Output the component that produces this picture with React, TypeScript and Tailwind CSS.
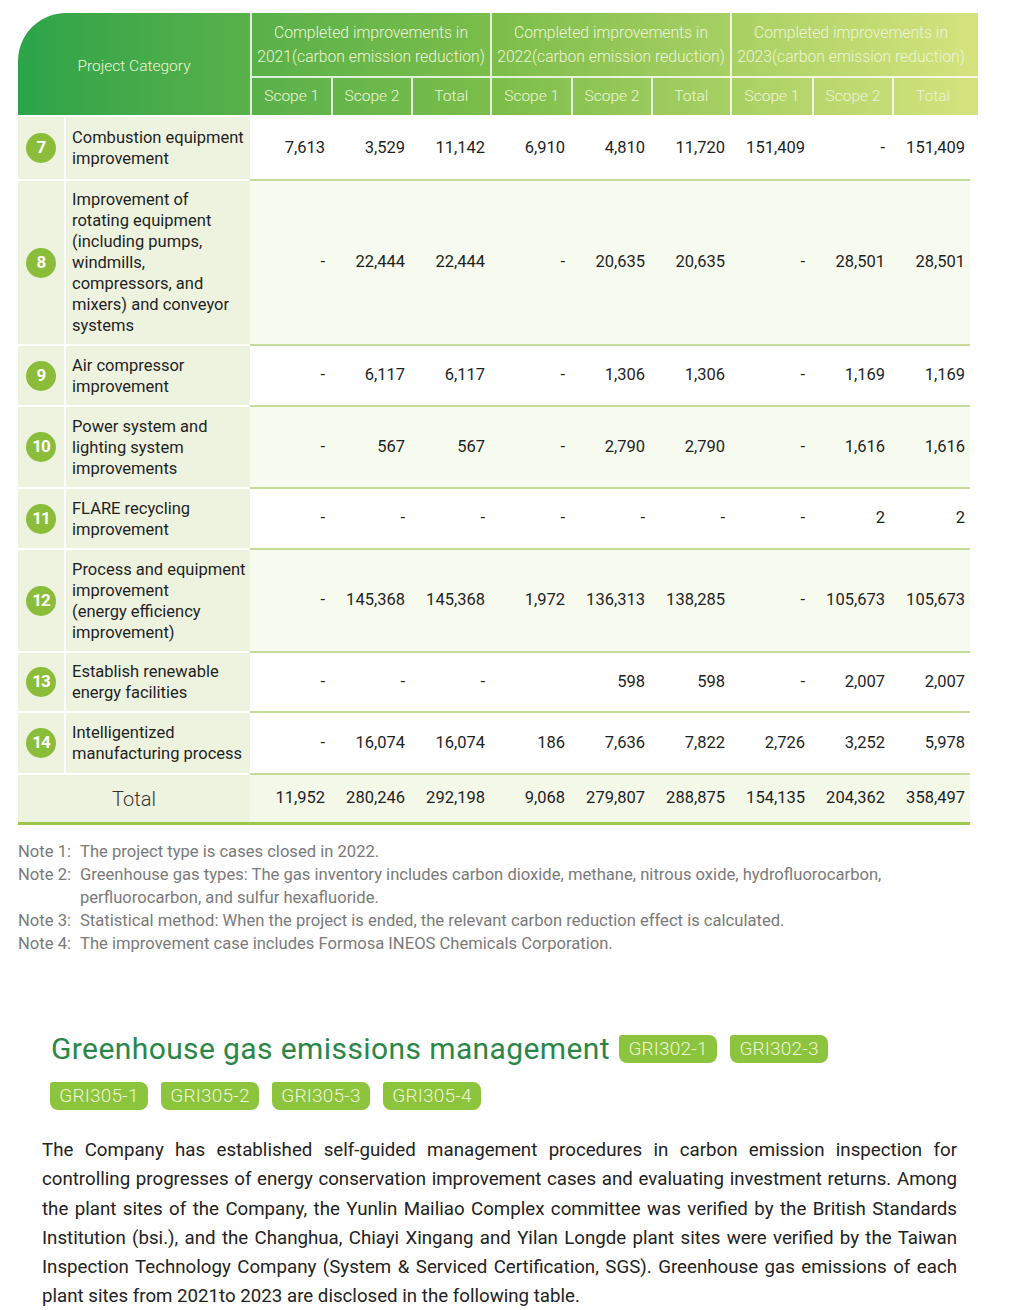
import React from "react";

type Row = {
  n: number;
  label: string[];
  h: string;
  shade: boolean;
  v: string[];
};

const rows: Row[] = [
  {
    n: 7,
    label: ["Combustion equipment", "improvement"],
    h: "h-[64px]",
    shade: false,
    v: ["7,613", "3,529", "11,142", "6,910", "4,810", "11,720", "151,409", "-", "151,409"],
  },
  {
    n: 8,
    label: [
      "Improvement of",
      "rotating equipment",
      "(including pumps,",
      "windmills,",
      "compressors, and",
      "mixers) and conveyor",
      "systems",
    ],
    h: "h-[165px]",
    shade: true,
    v: ["-", "22,444", "22,444", "-", "20,635", "20,635", "-", "28,501", "28,501"],
  },
  {
    n: 9,
    label: ["Air compressor", "improvement"],
    h: "h-[61px]",
    shade: false,
    v: ["-", "6,117", "6,117", "-", "1,306", "1,306", "-", "1,169", "1,169"],
  },
  {
    n: 10,
    label: ["Power system and", "lighting system", "improvements"],
    h: "h-[82px]",
    shade: true,
    v: ["-", "567", "567", "-", "2,790", "2,790", "-", "1,616", "1,616"],
  },
  {
    n: 11,
    label: ["FLARE recycling", "improvement"],
    h: "h-[61px]",
    shade: false,
    v: ["-", "-", "-", "-", "-", "-", "-", "2", "2"],
  },
  {
    n: 12,
    label: ["Process and equipment", "improvement", "(energy efficiency", "improvement)"],
    h: "h-[103px]",
    shade: true,
    v: ["-", "145,368", "145,368", "1,972", "136,313", "138,285", "-", "105,673", "105,673"],
  },
  {
    n: 13,
    label: ["Establish renewable", "energy facilities"],
    h: "h-[60px]",
    shade: false,
    v: ["-", "-", "-", "", "598", "598", "-", "2,007", "2,007"],
  },
  {
    n: 14,
    label: ["Intelligentized", "manufacturing process"],
    h: "h-[62px]",
    shade: false,
    v: ["-", "16,074", "16,074", "186", "7,636", "7,822", "2,726", "3,252", "5,978"],
  },
];

const totals = ["11,952", "280,246", "292,198", "9,068", "279,807", "288,875", "154,135", "204,362", "358,497"];

const years = ["2021", "2022", "2023"];

const notes = [
  ["Note 1:", "The project type is cases closed in 2022."],
  [
    "Note 2:",
    "Greenhouse gas types: The gas inventory includes carbon dioxide, methane, nitrous oxide, hydrofluorocarbon, perfluorocarbon, and sulfur hexafluoride.",
  ],
  ["Note 3:", "Statistical method: When the project is ended, the relevant carbon reduction effect is calculated."],
  ["Note 4:", "The improvement case includes Formosa INEOS Chemicals Corporation."],
];

const paragraph = [
  "The Company has established self-guided management procedures in carbon emission inspection for",
  "controlling progresses of energy conservation improvement cases and evaluating investment returns. Among",
  "the plant sites of the Company, the Yunlin Mailiao Complex committee was verified by the British Standards",
  "Institution (bsi.), and the Changhua, Chiayi Xingang and Yilan Longde plant sites were verified by the Taiwan",
  "Inspection Technology Company (System & Serviced Certification, SGS). Greenhouse gas emissions of each",
];

function Badge({ children }: { children: React.ReactNode }) {
  return (
    <span className="flex h-[28px] w-[98px] items-center justify-center rounded-lg rounded-tl-[3px] bg-[#8cc43e] text-[19px] font-light tracking-[0.2px] text-[#eef6d6]">
      {children}
    </span>
  );
}

export default function App() {
  return (
    <div className="min-h-[1310px] w-[1009px] bg-white pt-[13px] font-[Roboto,sans-serif]">
      {/* Table header */}
      <div className="ml-[18px] mb-[2px] flex h-[102px] w-[960px] rounded-tl-[48px] bg-linear-to-r from-[#2ba449] via-[#7cbe4a] to-[#d5e37e] text-[15.5px] font-light text-[#eef5da]">
        <div className="flex w-[232px] items-center justify-center pt-[6px]">Project Category</div>
        {years.map((y, i) => (
          <div
            key={y}
            className={`flex flex-col border-l-2 border-white/80 ${i === 2 ? "w-[248px]" : "w-[240px]"}`}
          >
            <div className={`flex h-[63px] flex-col items-center justify-center whitespace-nowrap text-[15.7px] leading-[24px] ${i === 2 ? "pr-[8px]" : ""}`}>
              <span>Completed improvements in</span>
              <span>{y}(carbon emission reduction)</span>
            </div>
            <div className="flex h-[39px] border-t-2 border-white/80">
              {["Scope 1", "Scope 2", "Total"].map((s, j) => (
                <div
                  key={s}
                  className={`flex w-[80px] items-center justify-center ${j > 0 ? "border-l-2 border-white/80" : ""}`}
                >
                  {s}
                </div>
              ))}
            </div>
          </div>
        ))}
      </div>

      {/* Table body */}
      <div className="ml-[18px] w-[952px] text-[16.5px] text-[#1f1f1f]">
        {rows.map((r) => (
          <div key={r.n} className={`flex ${r.h}`}>
            <div className="flex w-[232px] border-b-2 border-white">
              <div className="flex w-[48px] items-center justify-center border-r-2 border-white bg-[#edf3df]">
                <span className="flex h-[30px] w-[30px] items-center justify-center rounded-full bg-[#8bbd3b] text-[17px] font-bold tracking-[-1px] text-white">
                  {r.n}
                </span>
              </div>
              <div className="flex flex-1 flex-col justify-center bg-[#edf3df] pl-[6px] leading-[21px]">
                {r.label.map((l) => (
                  <span key={l} className="whitespace-nowrap">{l}</span>
                ))}
              </div>
            </div>
            <div className={`flex flex-1 border-b-2 border-[#c6da99] ${r.shade ? "bg-[#f7faee]" : "bg-white"}`}>
              {r.v.map((v, i) => (
                <div key={i} className="flex w-[80px] items-center justify-end pr-[5px]">
                  {v}
                </div>
              ))}
            </div>
          </div>
        ))}
        <div className="flex h-[50px] border-b-[3px] border-[#9dc74c]">
          <div className="flex w-[232px] items-center justify-center bg-[#edf3df] text-[20px] font-light text-[#333]">
            Total
          </div>
          <div className="flex flex-1 bg-[#f4f8e9]">
            {totals.map((v, i) => (
              <div key={i} className="flex w-[80px] items-center justify-end pr-[5px]">
                {v}
              </div>
            ))}
          </div>
        </div>
      </div>

      {/* Notes */}
      <div className="ml-[18px] mt-[15px] w-[880px] text-[16.6px] leading-[23px] text-[#7a7a7a]">
        {notes.map(([k, t]) => (
          <div key={k} className="flex">
            <span className="w-[62px] shrink-0">{k}</span>
            <span>{t}</span>
          </div>
        ))}
      </div>

      {/* Section heading */}
      <div className="ml-[50px] mt-[76px] flex w-[800px] flex-wrap items-center gap-x-[13px] gap-y-[15px]">
        <h2 className="-mr-[4px] pl-[1px] text-[30px] leading-[36px] tracking-[0.4px] text-[#2a8748]">
          Greenhouse gas emissions management
        </h2>
        <Badge>GRI302-1</Badge>
        <Badge>GRI302-3</Badge>
        <Badge>GRI305-1</Badge>
        <Badge>GRI305-2</Badge>
        <Badge>GRI305-3</Badge>
        <Badge>GRI305-4</Badge>
      </div>

      {/* Paragraph */}
      <div className="ml-[42px] mt-[26px] w-[915px] text-[18.7px] leading-[29.3px] text-[#222]">
        {paragraph.map((l) => (
          <div key={l} className="text-justify [text-align-last:justify]">
            {l}
          </div>
        ))}
        <div>plant sites from 2021to 2023 are disclosed in the following table.</div>
      </div>
    </div>
  );
}
